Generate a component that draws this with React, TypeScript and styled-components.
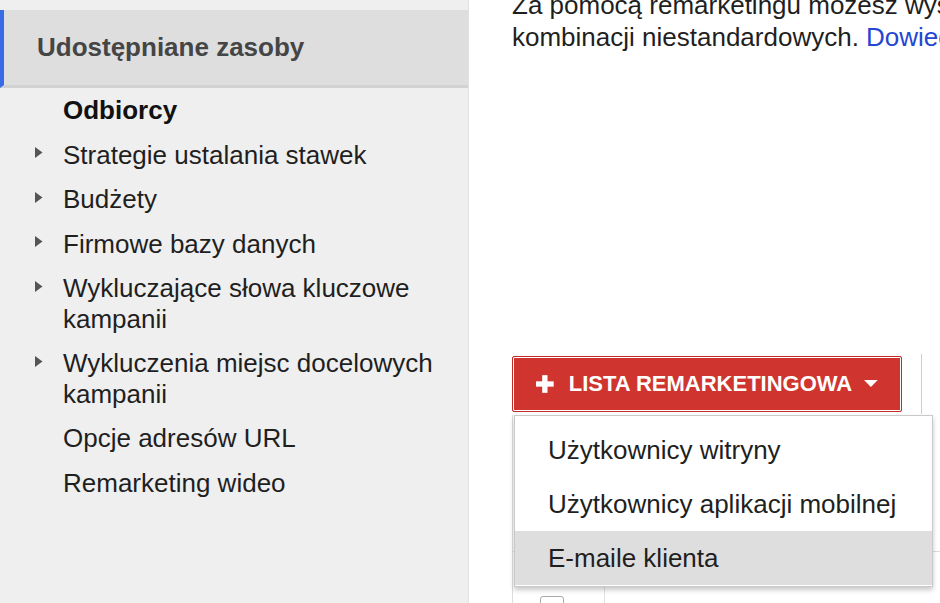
import React from "react";
import styled, { createGlobalStyle } from "styled-components";

const GlobalStyle = createGlobalStyle`
  html, body {
    margin: 0;
    padding: 0;
    background: #ffffff;
  }
  body {
    font-family: "Liberation Sans", Arial, sans-serif;
  }
`;

const Page = styled.div`
  display: flex;
  width: 940px;
  height: 603px;
  overflow: hidden;
  background: #ffffff;
`;

const Sidebar = styled.aside`
  flex: 0 0 468px;
  padding-top: 10px;
  background: #efefef;
  border-right: 1px solid #e2e2e2;
`;

const SectionHeader = styled.div`
  height: 75px;
  display: flex;
  align-items: center;
  padding-left: 33px;
  background: #dedede;
  border-left: 4px solid #3a6be6;
  border-bottom: 3px solid #d2d2d2;
  font-size: 26px;
  font-weight: bold;
  color: #454545;
`;

const NavList = styled.ul`
  list-style: none;
  margin: 0;
  padding: 0;
`;

const NavItem = styled.li<{ $active?: boolean }>`
  display: flex;
  align-items: flex-start;
  padding: 7px 18px 7px 35px;
  font-size: 26px;
  line-height: 30.5px;
  font-weight: ${(p) => (p.$active ? "bold" : "normal")};
  color: ${(p) => (p.$active ? "#111111" : "#1f1f1f")};
`;

const Marker = styled.span`
  flex: 0 0 28px;
  height: 30.5px;
  display: flex;
  align-items: center;
  padding-bottom: 4px;
  box-sizing: border-box;
`;

const Main = styled.main`
  flex: 1;
  padding-left: 43px;
  display: flex;
  flex-direction: column;
  min-width: 0;
`;

const Intro = styled.p`
  margin: -11px 0 0;
  font-size: 26px;
  line-height: 32px;
  color: #1f1f1f;
  white-space: nowrap;
`;

const Link = styled.a`
  color: #2346d3;
  text-decoration: none;
`;

const Toolbar = styled.div`
  position: relative;
  display: flex;
  align-items: center;
  margin-top: 303px;
  height: 56px;
`;

const PrimaryButton = styled.button`
  display: flex;
  align-items: center;
  height: 56px;
  width: 390px;
  padding: 0 23px;
  box-sizing: border-box;
  background: #cf352e;
  border: 1px solid #c22e27;
  box-shadow: inset 0 0 0 1px #ffffff;
  border-radius: 2px;
  color: #ffffff;
  font-family: inherit;
  font-size: 22px;
  font-weight: bold;
  cursor: pointer;
`;

const ButtonLabel = styled.span`
  margin: 0 12px 0 15px;
  white-space: nowrap;
`;

const Separator = styled.span`
  width: 1px;
  height: 60px;
  margin-left: 19px;
  background: #cfcfcf;
`;

const Menu = styled.ul`
  position: absolute;
  top: 59px;
  left: 2px;
  z-index: 2;
  width: 419px;
  margin: 0;
  padding: 7px 0 1px;
  list-style: none;
  box-sizing: border-box;
  background: #ffffff;
  border: 1px solid #c9c9c9;
  box-shadow: 0 3px 5px rgba(0, 0, 0, 0.22);
`;

const MenuItem = styled.li<{ $hover?: boolean }>`
  height: 54px;
  display: flex;
  align-items: center;
  padding-left: 33px;
  font-size: 26px;
  color: #1f1f1f;
  background: ${(p) => (p.$hover ? "#dedede" : "transparent")};
`;

const Table = styled.div`
  margin-top: 3px;
  border-left: 1px solid #dddddd;
  display: flex;
  flex-direction: column;
`;

const TableHead = styled.div`
  height: 136px;
  border-bottom: 1px solid #dcdcdc;
`;

const TableRow = styled.div`
  display: flex;
  height: 60px;
`;

const CheckCell = styled.div`
  width: 92px;
  border-right: 1px solid #e2e2e2;
  padding: 44px 0 0 27px;
  box-sizing: border-box;
`;

const Checkbox = styled.span`
  display: block;
  width: 24px;
  height: 24px;
  border: 1px solid #a8a8a8;
  border-radius: 3px;
  box-sizing: border-box;
`;

const Triangle = () => (
  <svg width="8" height="11" viewBox="0 0 8 11">
    <polygon points="0,0 7.5,5.5 0,11" fill="#555555" />
  </svg>
);

const PlusIcon = () => (
  <svg width="18" height="18" viewBox="0 0 18 18">
    <rect x="6.3" y="0" width="5.4" height="18" fill="#ffffff" />
    <rect x="0" y="6.3" width="18" height="5.4" fill="#ffffff" />
  </svg>
);

const Caret = () => (
  <svg width="14" height="8" viewBox="0 0 14 8">
    <polygon points="0,0 14,0 7,7" fill="#ffffff" />
  </svg>
);

const navItems: { label: string; expandable: boolean; active?: boolean }[] = [
  { label: "Odbiorcy", expandable: false, active: true },
  { label: "Strategie ustalania stawek", expandable: true },
  { label: "Budżety", expandable: true },
  { label: "Firmowe bazy danych", expandable: true },
  { label: "Wykluczające słowa kluczowe kampanii", expandable: true },
  { label: "Wykluczenia miejsc docelowych kampanii", expandable: true },
  { label: "Opcje adresów URL", expandable: false },
  { label: "Remarketing wideo", expandable: false },
];

const menuItems = [
  "Użytkownicy witryny",
  "Użytkownicy aplikacji mobilnej",
  "E-maile klienta",
];

export default function App() {
  return (
    <>
      <GlobalStyle />
      <Page>
        <Sidebar>
          <SectionHeader>Udostępniane zasoby</SectionHeader>
          <NavList>
            {navItems.map((item, i) => (
              <NavItem key={i} $active={item.active}>
                <Marker>{item.expandable && <Triangle />}</Marker>
                <span>{item.label}</span>
              </NavItem>
            ))}
          </NavList>
        </Sidebar>
        <Main>
          <Intro>
            Za pomocą remarketingu możesz wyświetlać reklamy użytkownikom, którzy odwiedzili Twoją witrynę,
            <br />
            kombinacji niestandardowych. <Link href="#">Dowiedz się więcej</Link>
          </Intro>
          <Toolbar>
            <PrimaryButton>
              <PlusIcon />
              <ButtonLabel>LISTA REMARKETINGOWA</ButtonLabel>
              <Caret />
            </PrimaryButton>
            <Separator />
            <Menu>
              {menuItems.map((m, i) => (
                <MenuItem key={m} $hover={i === menuItems.length - 1}>
                  {m}
                </MenuItem>
              ))}
            </Menu>
          </Toolbar>
          <Table>
            <TableHead />
            <TableRow>
              <CheckCell>
                <Checkbox />
              </CheckCell>
            </TableRow>
          </Table>
        </Main>
      </Page>
    </>
  );
}
